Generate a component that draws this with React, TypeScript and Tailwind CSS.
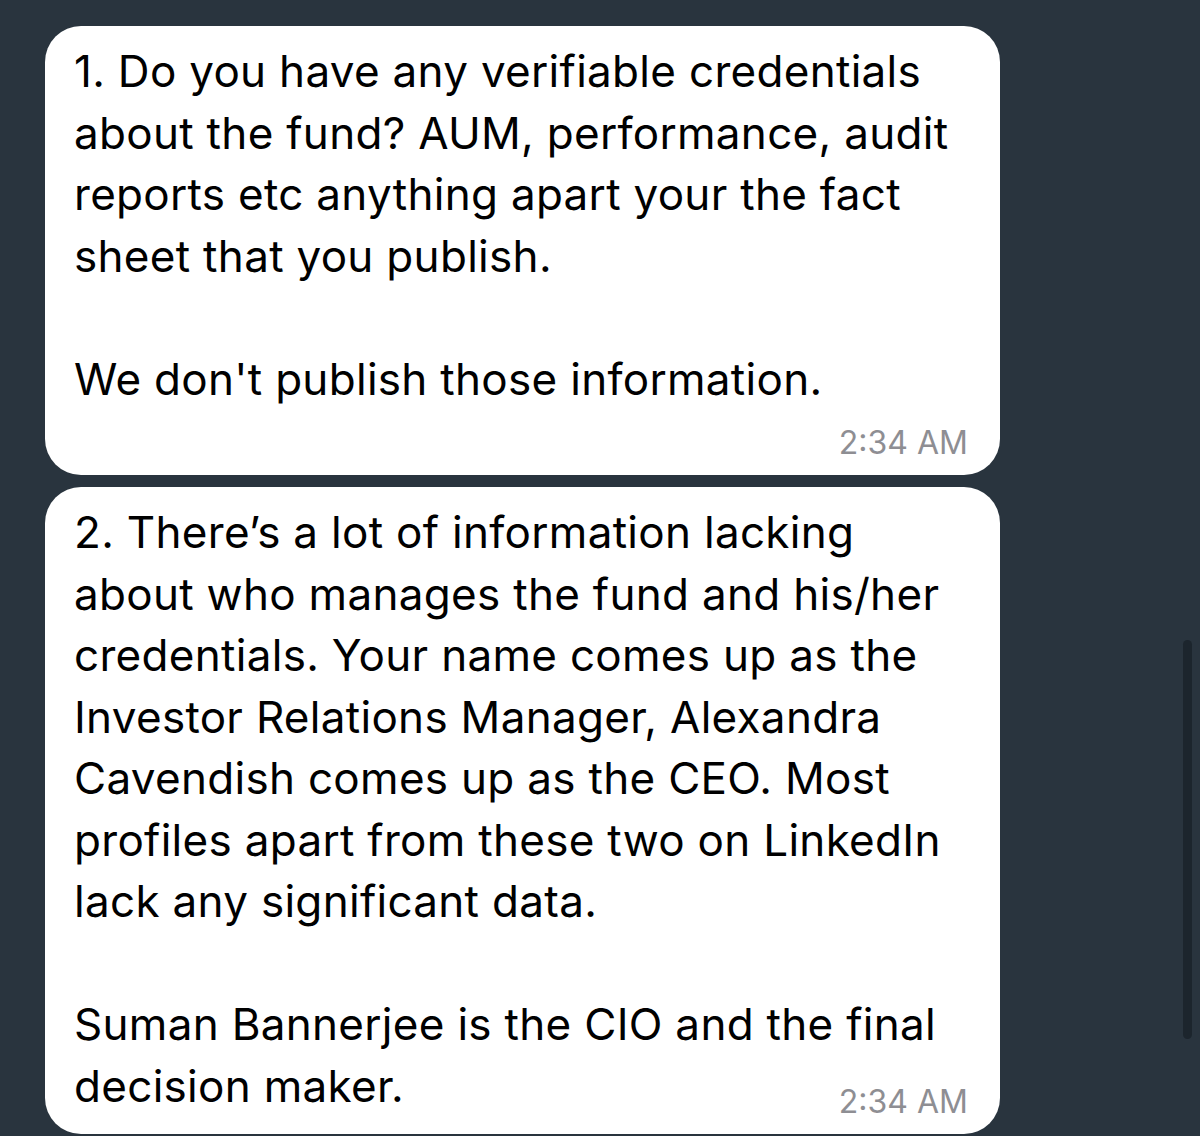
const first = [
  "1. Do you have any verifiable credentials",
  "about the fund? AUM, performance, audit",
  "reports etc anything apart your the fact",
  "sheet that you publish.",
  "",
  "We don't publish those information.",
];

const second = [
  "2. There\u2019s a lot of information lacking",
  "about who manages the fund and his/her",
  "credentials. Your name comes up as the",
  "Investor Relations Manager, Alexandra",
  "Cavendish comes up as the CEO. Most",
  "profiles apart from these two on LinkedIn",
  "lack any significant data.",
  "",
  "Suman Bannerjee is the CIO and the final",
  "decision maker.",
];

// inline = time sits beside the last line; otherwise it gets its own row
const Bubble = ({ lines, inline }: { lines: string[]; inline?: boolean }) => {
  return (
    <div className="w-[955px] bg-white rounded-[36px] pl-[29px] pr-[32px] pt-[15px] pb-[12px]">
      <div className="text-[44px] leading-[61.5px] text-black tracking-[0.3px]">
        {lines.map((l, i) => (
          <div key={i} className="whitespace-nowrap h-[61.5px]">
            {l}
          </div>
        ))}
      </div>
      <div className={"flex justify-end " + (inline ? "-mt-[35px]" : "mt-[13px]")}>
        <span className="text-[32px] leading-[40px] text-[#8e8e93]">2:34 AM</span>
      </div>
    </div>
  );
};

export default function App() {
  return (
    <div
      className="w-[1200px] h-[1136px] overflow-hidden bg-[#29343e] relative"
      style={{ fontFamily: "Inter, 'Noto Sans', sans-serif" }}
    >
      <div className="flex flex-col gap-[12px] pl-[45px] pt-[26px]">
        <Bubble lines={first} />
        <Bubble lines={second} inline />
      </div>
      {/* scroll indicator */}
      <div className="absolute left-[1183px] top-[640px] w-[9px] h-[399px] rounded-full bg-[#1c252d]" />
    </div>
  );
}
